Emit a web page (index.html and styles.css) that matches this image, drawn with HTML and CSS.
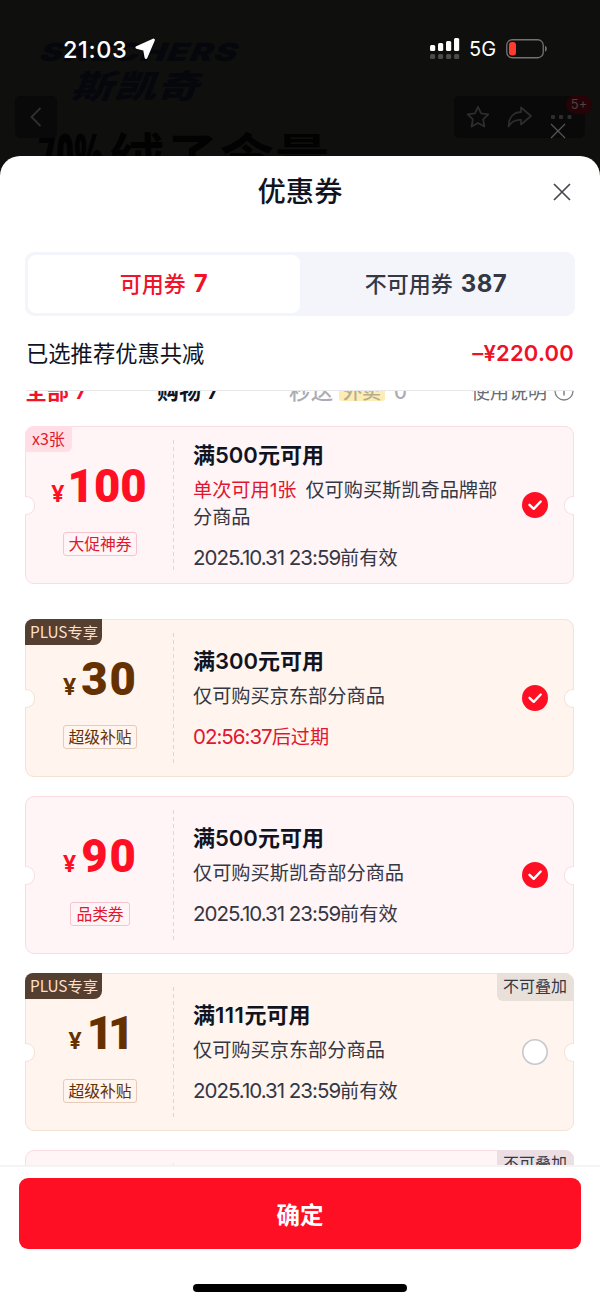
FILE: index.html
```
<!DOCTYPE html>
<html lang="zh-CN">
<head>
<meta charset="utf-8">
<title>优惠券</title>
<link rel="stylesheet" href="styles.css">
</head>
<body>
<div class="phone">
  <header class="top">
    <div class="status">
      <span class="clock">21:03</span>
      <svg class="loc" width="22" height="22" viewBox="0 0 22 22"><path d="M19.500 2 2.800 9.500 10.500 11.500 12 19.500z" fill="#fff" stroke="#fff" stroke-width="2.800" stroke-linejoin="round"/></svg>
      <svg class="signal" width="30" height="22" viewBox="0 0 30 22"><g fill="#fff"><rect x="0" y="7" width="5.200" height="6" rx="1.500"/><rect x="8" y="5" width="5.200" height="8" rx="1.500"/><rect x="16" y="3" width="5.200" height="10" rx="1.500"/><rect x="24" y="0" width="5.200" height="13" rx="1.500"/></g><g fill="#4b4b4b"><rect x="0" y="16" width="5.200" height="5" rx="1.500"/><rect x="8" y="16" width="5.200" height="5" rx="1.500"/><rect x="16" y="16" width="5.200" height="5" rx="1.500"/><rect x="24" y="16" width="5.200" height="5" rx="1.500"/></g></svg>
      <span class="net">5G</span>
      <svg class="battery" width="42" height="20" viewBox="0 0 42 20"><rect x=".75" y=".75" width="36.500" height="18" rx="5.500" fill="none" stroke="#737373" stroke-width="1.300"/><rect x="3" y="3" width="7" height="13.500" rx="3" fill="#ff3b30"/><path d="M39 6.800c2.400 1.200 2.400 4.800 0 6z" fill="#737373"/></svg>
    </div>
    <div class="dimmed">
      <div class="brand-en">SKECHERS</div>
      <div class="brand-cn">斯凯奇</div>
      <div class="slogan"><span class="percent">70%</span><span>绒子含量</span></div>
      <div class="back"><svg width="12" height="20" viewBox="0 0 12 20"><path d="M10.500 1 1.500 10l9 9" fill="none" stroke="#303030" stroke-width="1.800"/></svg></div>
      <div class="tools">
        <svg width="24" height="24" viewBox="0 0 24 24"><path d="m12 1.800 3.100 6.500 7.200 1-5.200 5 1.300 7.200-6.400-3.500-6.400 3.500 1.300-7.200-5.200-5 7.200-1z" fill="none" stroke="#2d2d2d" stroke-width="1.800" stroke-linejoin="round"/></svg>
        <svg width="26" height="24" viewBox="0 0 26 24"><path d="M14 2.500 24 11l-10 8.500V15C8 14.500 4.500 16.500 1.500 21.500 1.500 13 6 7.500 14 7z" fill="none" stroke="#2d2d2d" stroke-width="1.800" stroke-linejoin="round"/></svg>
        <svg width="22" height="24" viewBox="0 0 22 24"><g fill="#2d2d2d"><rect x="1" y="10" width="4" height="4" rx="1"/><rect x="9" y="10" width="4" height="4" rx="1"/><rect x="17.500" y="10" width="4" height="4" rx="1"/></g></svg>
      </div>
      <div class="count">5+</div>
      <svg class="ghost-x" width="16" height="16" viewBox="0 0 16 16"><path d="m1 1 14 14M15 1 1 15" stroke="#575757" stroke-width="1.200"/></svg>
    </div>
  </header>

  <main class="sheet">
    <div class="title-row"><h1>优惠券</h1>
      <svg class="close" width="18" height="18" viewBox="0 0 18 18"><path d="m1 1 16 16M17 1 1 17" stroke="#454850" stroke-width="1.700"/></svg>
    </div>
    <div class="tabs">
      <div class="tab active">可用券<b>7</b></div>
      <div class="tab">不可用券<b>387</b></div>
    </div>
    <div class="summary"><span>已选推荐优惠共减</span><span class="saved">–¥220.00</span></div>

    <div class="list">
      <div class="filters">
        <span class="f-all">全部 <i>7</i></span>
        <span class="f-shop">购物 <i>7</i></span>
        <span class="f-fast">秒送<em>外卖</em><i>0</i></span>
        <span class="f-help">使用说明<svg width="20" height="20" viewBox="0 0 20 20"><circle cx="10" cy="10" r="9" fill="none" stroke="#7d8087" stroke-width="1.300"/><path d="M10 8.500v6M10 5v1.500" stroke="#7d8087" stroke-width="1.500"/></svg></span>
      </div>

      <article class="card pink first">
        <span class="corner times">x3张</span>
        <div class="value"><div class="amount"><small>¥</small><strong class="n100">100</strong></div><span class="tag">大促神券</span></div>
        <div class="info"><h2>满<b>500</b>元可用</h2><p><span class="red">单次可用<b>1</b>张</span>仅可购买斯凯奇品牌部<br>分商品</p><time><b>2025.10.31 23:59</b>前有效</time></div>
        <svg class="check" width="26" height="26" viewBox="0 0 26 26"><circle cx="13" cy="13" r="13" fill="#ff0f23"/><path d="m7.500 12.800 4.200 4 7-7.300" fill="none" stroke="#fff" stroke-width="2.400" stroke-linecap="round" stroke-linejoin="round"/></svg>
      </article>

      <article class="card cream second">
        <span class="corner plus">PLUS专享</span>
        <div class="value"><div class="amount"><small>¥</small><strong>30</strong></div><span class="tag">超级补贴</span></div>
        <div class="info"><h2>满<b>300</b>元可用</h2><p>仅可购买京东部分商品</p><time class="red"><b class="left">02:56:37</b>后过期</time></div>
        <svg class="check" width="26" height="26" viewBox="0 0 26 26"><circle cx="13" cy="13" r="13" fill="#ff0f23"/><path d="m7.500 12.800 4.200 4 7-7.300" fill="none" stroke="#fff" stroke-width="2.400" stroke-linecap="round" stroke-linejoin="round"/></svg>
      </article>

      <article class="card pink">
        <div class="value"><div class="amount"><small>¥</small><strong>90</strong></div><span class="tag">品类券</span></div>
        <div class="info"><h2>满<b>500</b>元可用</h2><p>仅可购买斯凯奇部分商品</p><time><b>2025.10.31 23:59</b>前有效</time></div>
        <svg class="check" width="26" height="26" viewBox="0 0 26 26"><circle cx="13" cy="13" r="13" fill="#ff0f23"/><path d="m7.500 12.800 4.200 4 7-7.300" fill="none" stroke="#fff" stroke-width="2.400" stroke-linecap="round" stroke-linejoin="round"/></svg>
      </article>

      <article class="card cream">
        <span class="corner plus">PLUS专享</span>
        <span class="corner nostack">不可叠加</span>
        <div class="value"><div class="amount"><small>¥</small><strong class="n11">11</strong></div><span class="tag">超级补贴</span></div>
        <div class="info"><h2>满<b class="ones">111</b>元可用</h2><p>仅可购买京东部分商品</p><time><b>2025.10.31 23:59</b>前有效</time></div>
        <svg class="check" width="26" height="26" viewBox="0 0 26 26"><circle cx="13" cy="13" r="12.200" fill="#fff" stroke="#c6c8cb" stroke-width="1.600"/></svg>
      </article>

      <article class="card pink">
        <span class="corner nostack">不可叠加</span>
        <div class="value"></div>
      </article>
    </div>

    <footer class="footer">
      <button class="confirm">确定</button>
      <div class="home"></div>
    </footer>
  </main>
</div>
</body>
</html>
```
FILE: styles.css
```
* { box-sizing: border-box; }
body { margin: 0; background: #0f0f0e; font-family: "Noto Sans CJK SC", sans-serif; color: #11141f; }
i, em { font-style: normal; }
.phone { width: 600px; height: 1304px; overflow: hidden; display: flex; flex-direction: column; }

/* status bar above the dimmed product page */
.top { position: relative; height: 156px; flex: none; background: #0f0f0e; padding-top: 35px; }
.status { position: relative; z-index: 2; display: flex; align-items: center; height: 28px; padding-left: 63px; color: #fff; font-family: Inter, sans-serif; }
.clock { font-size: 23.500px; font-weight: 500; letter-spacing: .6px; width: 71px; white-space: nowrap; }
.loc { margin-top: -1px; }
.signal { margin-left: 274px; }
.net { width: 30px; margin-left: 9px; font-size: 20px; white-space: nowrap; }
.battery { margin-left: 7px; }
.dimmed { position: absolute; inset: 0; overflow: hidden; color: #05070c; }
.brand-en { position: absolute; left: 41px; top: 37px; font: italic 900 25px/30px Inter, sans-serif; letter-spacing: 1px; transform: scaleX(1.36) skewX(-8deg); transform-origin: 0 50%; }
.brand-cn { position: absolute; left: 76px; top: 66px; font-size: 32px; line-height: 36px; font-weight: 900; letter-spacing: 1px; transform: scaleX(1.3) skewX(-16deg); transform-origin: 0 50%; }
.slogan { position: absolute; left: 38px; top: 126px; display: flex; gap: 6px; font-size: 54px; line-height: 60px; font-weight: 700; letter-spacing: 1px; color: #020203; }
.percent { display: block; width: 66px; font: 900 56px/54px "Noto Sans", sans-serif; transform: scaleX(.54); transform-origin: 0 0; }
.back, .tools { position: absolute; top: 96px; height: 42px; border-radius: 5px; background: #090909; display: flex; align-items: center; }
.back { left: 15px; width: 42px; padding-left: 15px; }
.tools { left: 454px; width: 131px; padding-left: 12px; gap: 17px; }
.count { position: absolute; left: 566px; top: 95px; width: 26px; height: 19px; border-radius: 10px; background: #250306; color: #4b4444; text-align: center; font: 13px/19px Inter, sans-serif; }
.ghost-x { position: absolute; left: 550px; top: 123px; }

/* coupon sheet */
.sheet { flex: 1; min-height: 0; background: #fff; border-radius: 20px 20px 0 0; display: flex; flex-direction: column; }
.title-row { height: 96px; padding-top: 15px; position: relative; flex: none; text-align: center; }
h1 { margin: 0; font-size: 28.300px; line-height: 38px; font-weight: 500; }
.close { position: absolute; left: 553px; top: 27px; }
.tabs { flex: none; height: 64px; margin: 0 25px; padding: 3px; border-radius: 9px; background: #f3f5fa; display: grid; grid-template-columns: 272px 1fr; }
.tab { display: flex; align-items: center; justify-content: center; padding-bottom: 4px; border-radius: 8px; font-size: 22px; font-weight: 500; color: #343744; }
.tab b { margin-left: 8px; padding-top: 3px; font: 700 24px Inter, sans-serif; letter-spacing: .4px; }
.tab.active { background: #fff; color: #f0142b; }
.summary { flex: none; height: 75px; margin: 0 26px; padding-bottom: 1px; border-bottom: 1px solid #e8e8ea; display: flex; justify-content: space-between; align-items: center; font-size: 22.300px; }
.summary span:first-child { padding-bottom: 2px; }
.saved { font: 600 22px Inter, sans-serif; letter-spacing: .2px; color: #ee1228; }

.list { flex: 1; min-height: 0; overflow: hidden; padding: 0 26px 0 25px; }
.filters { display: grid; grid-template-columns: 132px 132px 1fr auto; height: 34px; margin-top: -19px; margin-bottom: 20px; clip-path: inset(19px -5px 0); line-height: 34px; font-size: 22px; font-weight: 700; white-space: nowrap; }
.filters i { font-family: Inter, sans-serif; font-size: 20px; margin-left: 1px; }
.f-all { color: #f0142b; }
.f-fast { color: #aaacb2; font-weight: 500; }
.f-fast em { display: inline-block; height: 20px; line-height: 20px; margin: 0 8px 0 6px; padding: 0 4px; border-radius: 3px; background: #fdedb4; font-size: 19px; color: #b5ad8d; }
.f-help { font-size: 19px; font-weight: 400; color: #696c74; display: flex; align-items: center; gap: 7px; }

.card { position: relative; height: 158px; margin-bottom: 19px; border: 1px solid #fadde2; border-radius: 9px; background: #fff4f6; display: flex; align-items: center; }
.card.first { margin-bottom: 35px; }
.card.cream { background: #fff4ee; border-color: #f3e2d6; }
.card::before, .card::after { content: ""; position: absolute; top: 69px; width: 9px; height: 17px; background: #fff; border: 1px solid #fadde2; }
.card.cream::before, .card.cream::after { border-color: #f3e2d6; }
.card::before { left: -1px; border-left: 0; border-radius: 0 9px 9px 0; }
.card::after { right: -1px; border-right: 0; border-radius: 9px 0 0 9px; }

.value { width: 148px; height: 130px; flex: none; padding-top: 21px; display: flex; flex-direction: column; align-items: center; background: repeating-linear-gradient(#efcfd4 0 4px, transparent 4px 7px) right top / 1px 100% no-repeat; color: #ff0f23; }
.cream .value { color: #653100; background-image: repeating-linear-gradient(#e8d3c5 0 4px, transparent 4px 7px); }
.amount { height: 50px; display: flex; align-items: baseline; font-family: Roboto, sans-serif; line-height: 51px; font-weight: 700; }
.amount small { font: 700 23px/51px "Noto Sans", sans-serif; }
.amount strong { margin-left: 5px; margin-right: -1px; font-size: 45.500px; letter-spacing: 2px; }
.amount .n100 { letter-spacing: 0; margin-left: 3px; margin-right: 2px; }
.amount .n11 { letter-spacing: -5px; margin-right: 2px; }
.tag { margin-top: 21px; height: 24px; padding: 0 5px; border: 1px solid #f9c3cb; border-radius: 3px; font-size: 15.800px; line-height: 22px; letter-spacing: -.1px; color: #df1730; }
.cream .tag { border-color: #e6cbb8; color: #653100; }

.info { flex: 1; padding-left: 19px; white-space: nowrap; }
h2 { margin: 0; font-size: 22px; line-height: 30px; font-weight: 700; }
h2 b { font: 600 22px Inter, sans-serif; letter-spacing: 0; }
h2 .ones { letter-spacing: .5px; }
p { margin: 8px 0 0; font-size: 19.200px; line-height: 27px; color: #343744; }
p .red { margin-right: 9px; }
p .red b { font: 400 19px Inter, sans-serif; letter-spacing: -.3px; }
time { display: block; margin-top: 12px; font-size: 19.200px; line-height: 30px; color: #343744; }
time b { font: 400 20.500px/30px Inter, sans-serif; letter-spacing: -1px; }
time .left { letter-spacing: -1px; }
.red { color: #df1730; }
.check { position: absolute; left: 496px; top: 65px; }

.corner { position: absolute; top: -1px; height: 26px; padding: 0 5px; font-size: 16px; line-height: 24px; white-space: nowrap; }
.times { left: -1px; padding-left: 7px; width: 47px; border-radius: 9px 0 6px 0; background: #ffdfe5; color: #df1730; }
.plus { left: -1px; width: 77px; font-size: 15.300px; line-height: 25px; border-radius: 8px 0 8px 0; background: #543f31; color: #ffdfca; }
.nostack { right: -1px; width: 77px; height: 28px; padding: 0 6px; line-height: 25px; border-radius: 0 9px 0 6px; background: #eae0da; color: #343744; }
.pink .nostack { background: #ebdfe3; }

.footer { flex: none; height: 139px; padding: 11px 19px 0; border-top: 2px solid #f4f4f4; }
.confirm { display: block; width: 562px; height: 71px; padding: 0; border: 0; border-radius: 9px; background: #ff0f23; color: #fff; font: 700 23.500px "Noto Sans CJK SC", sans-serif; }
.home { width: 214px; height: 8px; margin: 35px auto 0; border-radius: 4px; background: #000; }
```
